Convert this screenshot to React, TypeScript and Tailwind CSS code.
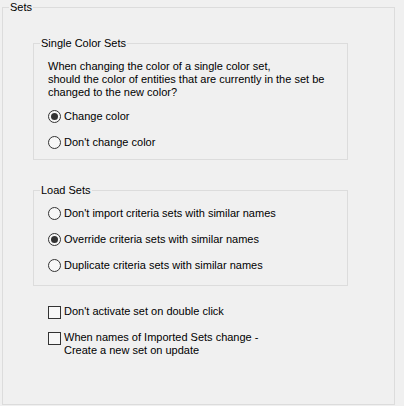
import React from "react";

function Radio({ checked, label }: { checked?: boolean; label: string }) {
  return (
    <label className="flex h-[26px] items-center">
      <span className="flex h-[13px] w-[13px] items-center justify-center rounded-full border border-[#333333] bg-[#f7f7f7]">
        {checked && <span className="h-[7px] w-[7px] rounded-full bg-[#333333]" />}
      </span>
      <span className="ml-[3px]">{label}</span>
    </label>
  );
}

function Check({ children }: { children: React.ReactNode }) {
  return (
    <label className="flex items-start">
      <span className="mt-[1px] h-[13px] w-[13px] shrink-0 border border-[#333333] bg-[#f7f7f7]" />
      <span className="ml-[3px] leading-[13px]">{children}</span>
    </label>
  );
}

function Group({
  title,
  className,
  children,
}: {
  title: string;
  className?: string;
  children: React.ReactNode;
}) {
  return (
    <fieldset className={"ml-[30px] w-[315px] border border-[#dcdcdc] pl-[14px] " + (className ?? "")}>
      <legend className="ml-[-8px] px-[1px] leading-[14px]">{title}</legend>
      {children}
    </fieldset>
  );
}

export default function App() {
  return (
    <div className="h-[406px] w-[404px] bg-[#f0f0f0] pl-[2px] font-['Liberation_Sans',Arial,sans-serif] text-[11px] text-black">
      <fieldset className="h-[405px] w-[393px] border border-[#dcdcdc]">
        <legend className="ml-[6px] px-[1px] leading-[14px]">Sets</legend>

        <Group title="Single Color Sets" className="mt-[22px] h-[124px]">
          <p className="mt-[10px] leading-[13px]">
            When changing the color of a single color set,
            <br />
            should the color of entities that are currently in the set be
            <br />
            changed to the new color?
          </p>
          <div className="mt-[4px] flex flex-col">
            <Radio checked label="Change color" />
            <Radio label="Don't change color" />
          </div>
        </Group>

        <Group title="Load Sets" className="mt-[23px] h-[103px]">
          <div className="mt-[3px] flex flex-col">
            <Radio label="Don't import criteria sets with similar names" />
            <Radio checked label="Override criteria sets with similar names" />
            <Radio label="Duplicate criteria sets with similar names" />
          </div>
        </Group>

        <div className="ml-[45px] mt-[19px] flex flex-col gap-[12px]">
          <Check>Don't activate set on double click</Check>
          <Check>
            When names of Imported Sets change -
            <br />
            Create a new set on update
          </Check>
        </div>
      </fieldset>
    </div>
  );
}
